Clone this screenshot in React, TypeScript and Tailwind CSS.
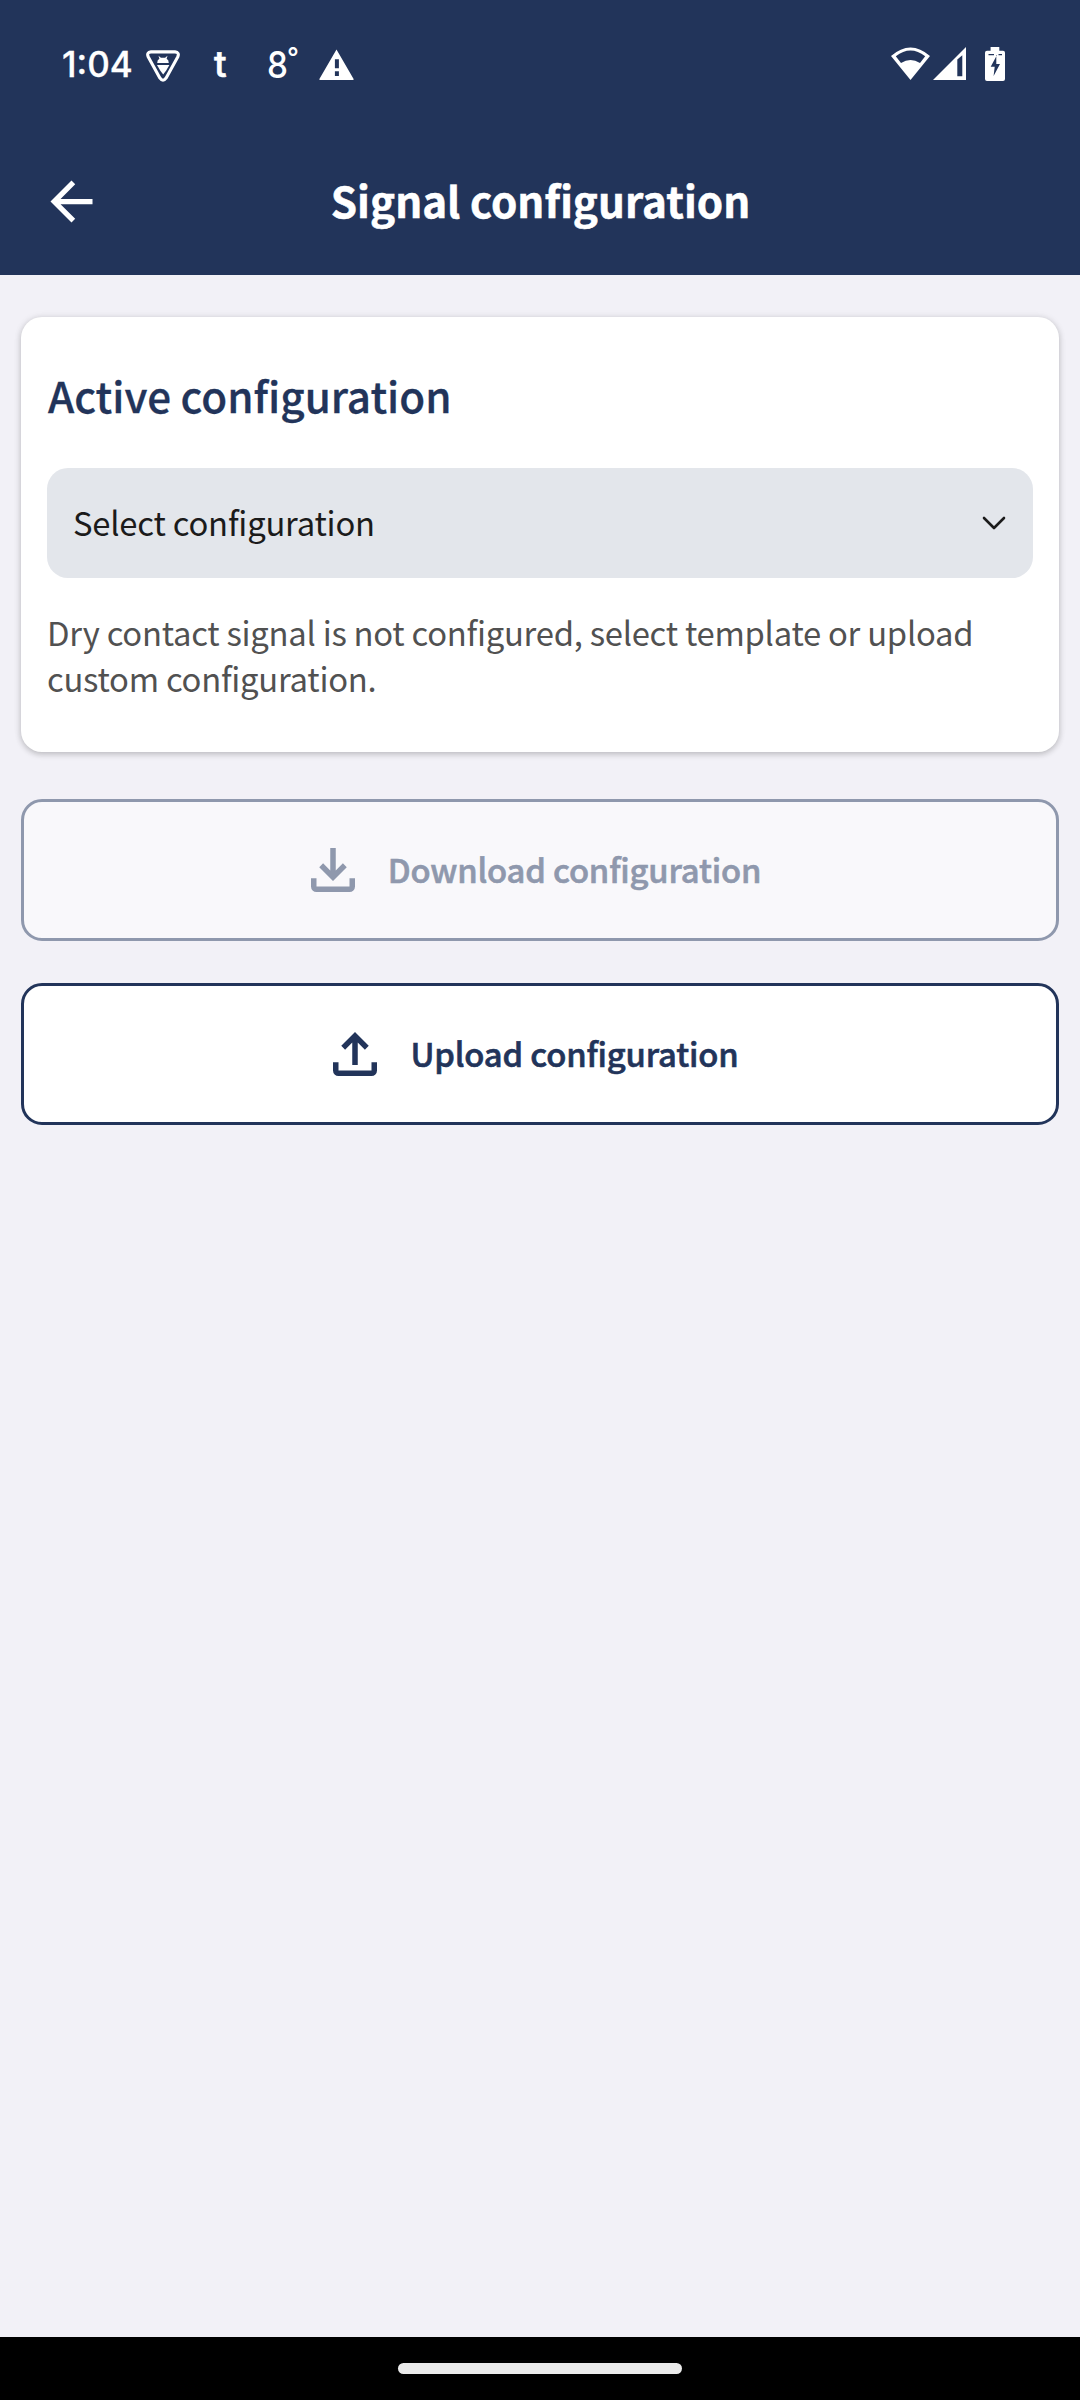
import type { ReactNode } from "react";

function VpnShieldIcon() {
  return (
    <svg className="mt-[9px] h-8 w-[34px]" viewBox="0 0 34 32" fill="none">
      <path
        d="M5 1.9H29Q33.8 2.3 31.7 7L20 28.2Q17 32.4 14 28.2L2.3 7Q.2 2.3 5 1.9Z"
        stroke="#fff"
        strokeWidth="3.1"
        strokeLinejoin="round"
      />
      <path d="M11.2 12.9Q11.2 9.8 13.4 8.7L12.5 5.8L14.9 7.8H19.1L21.5 5.8L20.6 8.7Q22.8 9.8 22.8 12.9Z" fill="#fff" />
      <path d="M11 15H23.4L20.2 20.6L17.2 24.6L14.2 20.6Z" fill="#fff" />
    </svg>
  );
}

function WarningIcon() {
  return (
    <svg className="mt-[8px] h-[31px] w-[35px]" viewBox="0 0 35 31" fill="#fff">
      <path
        fillRule="evenodd"
        d="M17.5 .4L34.6 30Q34.9 31 34 31H1Q.1 31 .4 30ZM15.9 10.3V19.3H19.9V10.3ZM15.9 22.3V27H19.9V22.3Z"
      />
    </svg>
  );
}

function WifiIcon() {
  return (
    <svg className="h-[33px] w-[39px]" viewBox="0 0 39 33" fill="#fff">
      <path
        fillRule="evenodd"
        d="M0 9Q19.5 -8 39 9L19.5 33ZM4.8 9.3L10 16Q19.5 10 29 16L34.2 9.3Q19.5 -2.3 4.8 9.3Z"
      />
    </svg>
  );
}

function SignalIcon() {
  return (
    <svg className="ml-[3px] h-[33px] w-[33px]" viewBox="0 0 33 33" fill="#fff">
      <path fillRule="evenodd" d="M0 33L33 0V33ZM24.3 12.6V29.3H29.3V8.3Z" />
    </svg>
  );
}

function BatteryIcon() {
  return (
    <svg className="ml-[19px] h-[34px] w-[20px]" viewBox="0 0 20 34" fill="#fff">
      <path
        fillRule="evenodd"
        d="M5.6 0H14.3V3.7H18Q20 3.7 20 5.7V32Q20 34 18 34H2Q0 34 0 32V5.7Q0 3.7 2 3.7H5.6ZM12 8L5.7 19.7H9.7L8.6 29L15 17H11.3V8ZM3.5 7V8.3H9V7ZM13.5 7V8.3H17V7Z"
      />
    </svg>
  );
}

function StatusBar() {
  return (
    <div className="flex h-32 items-start justify-between pt-[41px] pr-[75px] pl-[62px] font-['Inter',sans-serif] font-medium text-white">
      <div className="flex items-start leading-[46px] whitespace-nowrap">
        <span className="w-[84px] text-[35px] [-webkit-text-stroke:0.3px]">1:04</span>
        <VpnShieldIcon />
        <span className="ml-[34px] w-[14px] text-[37px] [-webkit-text-stroke:0.6px]">t</span>
        <span className="ml-[39px] flex w-[52px] items-start">
          <span className="w-[20px] origin-left scale-x-90 pt-px text-[37px]">8</span>
          <span className="pt-px text-[26px] leading-[30px]">°</span>
        </span>
        <WarningIcon />
      </div>
      <div className="flex items-start pt-[6px]">
        <WifiIcon />
        <SignalIcon />
        <BatteryIcon />
      </div>
    </div>
  );
}

function Header() {
  return (
    <header className="h-[275px] bg-[#22345a]">
      <StatusBar />
      <div className="grid h-[147px] grid-cols-[108px_1fr_108px] items-center">
        <svg className="ml-[40px] h-[63px] w-[63px]" viewBox="0 0 24 24" fill="#fff">
          <path d="M20 11H7.83l5.59-5.59L12 4l-8 8 8 8 1.41-1.41L7.83 13H20v-2z" />
        </svg>
        <h1 className="pb-[4px] pl-px text-center text-[42.2px] leading-[60px] font-bold text-white [-webkit-text-stroke:0.5px]">
          Signal configuration
        </h1>
      </div>
    </header>
  );
}

function ActiveConfiguration() {
  return (
    <section className="h-[435px] rounded-[21px] bg-white px-[26px] pt-12 shadow-[0_2px_6px_rgba(0,0,0,0.22),0_0_10px_rgba(0,0,0,0.05)]">
      <h2 className="pl-px text-[42.2px] leading-[60px] font-medium text-[#22345a] [-webkit-text-stroke:0.3px]">
        Active configuration
      </h2>
      <button className="mt-[43px] flex h-[110px] w-full items-center justify-between rounded-[21px] bg-[#e3e6eb] pr-[27px] pl-[26px] text-[32.8px] tracking-[-0.22px] text-[#1b1b1b]">
        <span className="pb-[3px] leading-[46px]">Select configuration</span>
        <svg className="h-[14px] w-[24px]" viewBox="0 0 24 14" fill="none" stroke="#1b1b1b" strokeWidth="2.6" strokeLinecap="round" strokeLinejoin="round">
          <path d="M2 2L12 12L22 2" />
        </svg>
      </button>
      <p className="mt-[31px] text-[32.8px] leading-[46px] tracking-[-0.26px] text-[#515151]">
        Dry contact signal is not configured, select template or upload custom configuration.
      </p>
    </section>
  );
}

function ActionButton({ children, icon, disabled = false }: { children: ReactNode; icon: string; disabled?: boolean }) {
  return (
    <button
      disabled={disabled}
      className={`flex h-[142px] w-full items-center justify-center rounded-[21px] border-[3px] pr-[19px] text-[32.8px] font-medium tracking-[-0.18px] ${
        disabled ? "border-[#8f98ad] bg-[#f9f8fb] text-[#8f98ad]" : "border-[#22345a] bg-white text-[#22345a]"
      }`}
    >
      <svg className="h-[66px] w-[66px]" viewBox="0 0 24 24" fill="currentColor">
        <path d={icon} />
        <path d="M6 20q-.825 0-1.413-.588T4 18v-3h2v3h12v-3h2v3q0 .825-.587 1.413T18 20Z" />
      </svg>
      <span className="ml-[22px] pb-[3px] leading-[46px] [-webkit-text-stroke:0.6px]">{children}</span>
    </button>
  );
}

export default function App() {
  return (
    <div className="flex h-[2400px] w-[1080px] flex-col bg-[#f2f1f7] font-['Noto_Sans_CJK_SC',sans-serif]">
      <Header />
      <main className="flex flex-1 flex-col px-[21px] pt-[42px]">
        <ActiveConfiguration />
        <div className="mt-[47px] flex flex-col gap-[42px]">
          <ActionButton disabled icon="m12 16-5-5 1.4-1.45 2.6 2.6V4h2v8.15l2.6-2.6L17 11Z">
            Download configuration
          </ActionButton>
          <ActionButton icon="M11 16V7.85l-2.6 2.6L7 9l5-5 5 5-1.4 1.45-2.6-2.6V16Z">Upload configuration</ActionButton>
        </div>
      </main>
      <footer className="flex h-[63px] items-center justify-center bg-black">
        <div className="h-[11px] w-[284px] rounded-full bg-[#ebebeb]" />
      </footer>
    </div>
  );
}
